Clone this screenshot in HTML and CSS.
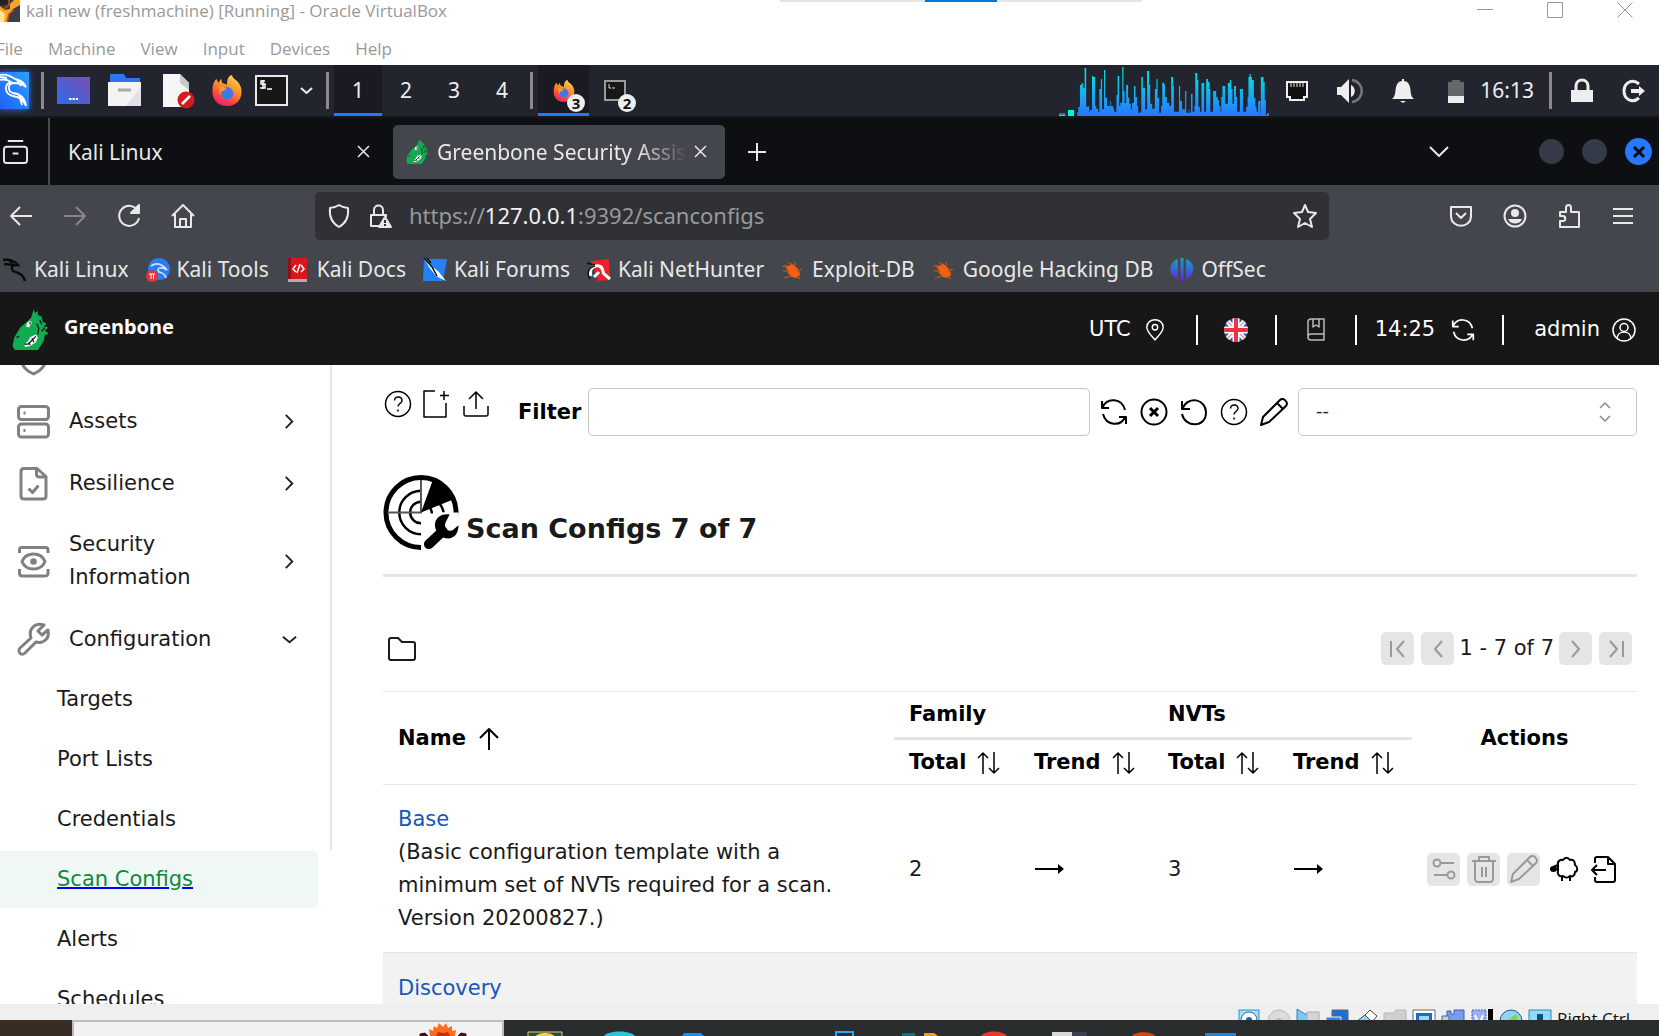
FILE: index.html
```html
<!DOCTYPE html>
<html lang="en">
<head>
<meta charset="utf-8">
<title>kali new (freshmachine) [Running] - Oracle VirtualBox</title>
<link rel="stylesheet" href="styles.css">
</head>
<body>
<svg class="defs" aria-hidden="true">
  <defs>
    <linearGradient id="g-fox" x1="0.8" y1="0" x2="0.3" y2="1"><stop offset="0" stop-color="#ffd94a"/><stop offset="0.45" stop-color="#ff8a2a"/><stop offset="0.8" stop-color="#ff3b47"/><stop offset="1" stop-color="#e0266e"/></linearGradient>
    <linearGradient id="g-cpu" x1="0" y1="0" x2="0" y2="1"><stop offset="0" stop-color="#00f0e0"/><stop offset="1" stop-color="#2777ff"/></linearGradient>
    <linearGradient id="g-desk" x1="0" y1="1" x2="1" y2="0"><stop offset="0" stop-color="#2f6be8"/><stop offset="1" stop-color="#7a4fb5"/></linearGradient>
    <linearGradient id="g-kali" x1="0" y1="1" x2="1" y2="0"><stop offset="0" stop-color="#1f62f5"/><stop offset="1" stop-color="#2ba0ff"/></linearGradient>
    <linearGradient id="g-off" x1="0" y1="0" x2="0" y2="1"><stop offset="0" stop-color="#12a5b8"/><stop offset="0.5" stop-color="#3565d8"/><stop offset="1" stop-color="#6a1fc4"/></linearGradient>
  </defs>
  <symbol id="firefox" viewBox="0 0 32 34"><path d="M16 33C7 33 1 27 1 18 1 12 2 8 5 5l2 4 3-4 1 4 5 2c0-5 1-9 5-10 1 4 4 4 7 8 2 3 3 6 3 9 0 9-6 15-15 15z" fill="url(#g-fox)"/><circle cx="16" cy="20" r="6.500" fill="#3f78e8"/><path d="M7 13c4-1 7 1 9 3-3 0-3 2-6 2l-1 4z" fill="#ff9a2e"/></symbol>
  <symbol id="gb-dragon" viewBox="0 0 38 42"><path d="M22 0l1 4 3-2v4l4 2 1 5 4 2-3 3 5 1-4 3 4 3-4 2-1 6-6 9-7 4-4-3-5 2-7-2-3-5 2-9 6-10 8-7 3-3z" fill="#11ab51"/><path d="M15 14l3-2 2 2-3 5-3-1z" fill="#fff"/><path d="M17 13l2 1-1 3z" fill="#171717"/><path d="M12 36l4-3 2-4 6-3 2 3-2 5-6 4-5 1z" fill="#fff"/><path d="M12 36l4 0 3-3 5-5M17 34l1 3M20 30l2 4M25 15l2 5-1 6M28 11l2 5M33 19l-3 4M4 29l3-1" fill="none" stroke="#171717" stroke-width="1.300"/></symbol>
  <symbol id="chev-r" viewBox="0 0 16 16"><path d="M4 1l7 7-7 7" /></symbol>
  <symbol id="chev-d" viewBox="0 0 16 16"><path d="M1 5l7 6 7-6"/></symbol>
  <symbol id="help" viewBox="0 0 28 28"><circle cx="14" cy="14" r="12.500"/><path d="M10.500 10.500c0-5 7.500-4.500 7.500 0 0 3-4 3-4 6M14 19.500v2"/></symbol>
  <symbol id="refresh" viewBox="0 0 28 28"><path d="M2 3v7h7M2.500 9.500C7-1 22 0 25 12M26 26v-7h-7M25.500 18.500C21 29 6 28 3 16"/></symbol>
  <symbol id="pencil" viewBox="0 0 28 28"><path d="M1 27l2-8L20 2c3-3 9 2 6 6L9 24zM17 5l6 6"/></symbol>
  <symbol id="sort" viewBox="0 0 26 24"><path d="M7 23V2M2 7l5-5 5 5M18 1v21M13 17l5 5 5-5"/></symbol>
  <symbol id="arrow" viewBox="0 0 32 16"><path d="M1 8h28"/><path d="M24 3l6 5-6 5z" fill="currentColor" stroke="none"/></symbol>
  <symbol id="bug" viewBox="0 0 24 24"><path d="M3 7l5 1 2-3 4 3 4 4 1 5-3 3-5-1-4-4-1-4z" fill="#f26012"/><path d="M7 4l3 3M14 4v4M21 11l-5 2M2 13h6M3 20l7-2M19 21l-3-3M1 8h5" fill="none" stroke="#a8521f" stroke-width="1.500"/></symbol>
</svg>

<header class="vb-head">
  <div class="vb-title">
    <svg class="vb-logo" viewBox="0 0 20 22"><path d="M0 0h20v22H0z" fill="#3a3d4a"/><path d="M0 6l5 4 5-1V4l4-4h6v5l-7 4-4 6-2 7H0z" fill="#f7a71b"/><path d="M0 0h9l-1 4-8 2z" fill="#222"/><path d="M0 10l5 4-1 8H0z" fill="#ffe3a0"/><path d="M9 0v5l-5 4M7 22l2-8 5-4" fill="none" stroke="#c64b12" stroke-width="1.500"/></svg>
    <span>kali new (freshmachine) [Running] - Oracle VirtualBox</span>
    <div class="vb-win">
      <button aria-label="Minimize"><svg viewBox="0 0 16 16"><path d="M0 7.500h16"/></svg></button>
      <button aria-label="Maximize"><svg viewBox="0 0 16 16"><path d="M.500.500h15v15H.500z"/></svg></button>
      <button aria-label="Close"><svg viewBox="0 0 16 16"><path d="M.500.500l15 15M15.500.500l-15 15"/></svg></button>
    </div>
  </div>
  <nav class="vb-menu"><button>File</button><button>Machine</button><button>View</button><button>Input</button><button>Devices</button><button>Help</button></nav>
  <div class="vb-strip"><i></i></div>
</header>

<div class="panel">
  <button class="kali-btn" aria-label="Applications"><svg viewBox="0 0 29 37"><path d="M0 0h29v37H0z" fill="url(#g-kali)"/><path d="M0 3c7-2 12 2 15 4 5 1 9 3 11 8-4-4-8-4-13-4-6 1-5 9 0 10 7 1 12 4 13 13-3-8-8-9-13-10-9-2-9-12-2-14C7 7 4 7 0 8M0 5l7 1M17 8l4 6M19 23l3 10" fill="none" stroke="#fff" stroke-width="1.800"/></svg></button>
  <span class="sep"></span>
  <div class="launch">
    <button aria-label="Show desktop"><svg viewBox="0 0 33 33"><path d="M0 3h33v27H0z" fill="url(#g-desk)"/><path d="M12 25h9" stroke="#fff" stroke-width="2" stroke-dasharray="2.500 1"/></svg></button>
    <button aria-label="Files"><svg viewBox="0 0 33 33"><path d="M3 0h14l2 4h14v10H3z" fill="#2f74ee"/><path d="M1 8h33v24H1z" fill="#f4f4f5"/><path d="M34 12v20H19z" fill="#e2e2e6"/><path d="M11 16h13" stroke="#aaa" stroke-width="3"/></svg></button>
    <button aria-label="Text editor"><svg viewBox="0 0 33 33"><path d="M6 0h17l9 9v24H6z" fill="#f6f6f6"/><path d="M23 0l9 9v7l-9-7z" fill="#c9c9cc"/><circle cx="29" cy="26" r="8.500" fill="#d51b20"/><path d="M25 30l8-8" stroke="#fff" stroke-width="2.500"/></svg></button>
    <button aria-label="Firefox"><svg viewBox="-4 0 33 33"><use href="#firefox" width="32" height="33"/></svg></button>
    <button aria-label="Terminal"><svg viewBox="0 0 33 33"><path d="M-1 2h31v29H-1z" fill="#171717" stroke="#e8e8e8" stroke-width="2"/><path d="M8 7H4v3h4v4H3M6 6v9M10 15h5" fill="none" stroke="#fff" stroke-width="1.500"/></svg></button>
  </div>
  <button class="more" aria-label="More"><svg class="ln w2" viewBox="0 0 13 13"><path d="M1 4l5.500 5L12 4"/></svg></button>
  <span class="sep sep-ws"></span>
  <div class="spaces"><button class="on">1</button><button>2</button><button>3</button><button>4</button></div>
  <span class="sep sep-ws"></span>
  <div class="tasks">
    <button class="on" aria-label="Firefox windows"><svg viewBox="0 0 22 24"><use href="#firefox" width="22" height="24"/></svg><b>3</b></button>
    <button aria-label="Terminal windows"><svg viewBox="0 0 22 24"><path d="M1 2h20v19H1z" fill="#171717" stroke="#9a9a9d" stroke-width="2"/><path d="M5 5v4h2M8 9h3" stroke="#ddd" fill="none"/></svg><b>2</b></button>
  </div>
  <div class="tray">
    <svg class="cpu" viewBox="28 195 541 153" preserveAspectRatio="none"><path d="M28 339h16v9H28z" fill="#15877c"/><path d="M28 345h16v3H28zM51 330h16v18H51z" fill="#00f5dc"/><path fill="url(#g-cpu)" d="M75 348V337H78V320H82V255H86V250H90V264H94V204H98V320H104V318H106V335H108V330H113V228H116V231H121V318H124V326H129V337H132V267H136V237H139V328H144V210H147V293H152V318H160V303H162V318H168V326H170V335H176V285H179V228H183V318H186V308H191V201H194V273H197V310H201V255H206V293H209V311H213V328H216V309H221V258H225V291H229V318H232V338H238V335H240V231H244V264H250V328H255V213H260V254H263V311H268V326H275V267H279V237H282V294H286V338H291V318H294V248H299V254H301V291H306V308H312V318H317V231H322V258H324V335H337V258H340V303H345V328H353V273H356V338H362V330H364V338H368V282H372V335H377V318H379V219H384V240H387V320H391V335H395V249H402V335H407V237H412V246H416V267H418V335H425V273H433V291H437V300H440V318H444V335H446V291H449V258H456V311H463V249H468V240H472V267H475V311H479V258H484V291H487V335H494V267H502V335H510V320H514V291H516V231H519V222H522V231H525V240H530V294H534V320H537V335H541V303H547V340H548V231H555V246H558V300H561V344H564V339H569V348z"/></svg>
    <div class="status">
      <svg viewBox="0 0 26 26"><path d="M3 4h20v15h-3v3H6v-3H3z" fill="#111" stroke="#eee" stroke-width="2"/><path d="M7 5v4M10 5v4M13 5v4M16 5v4M19 5v4" stroke="#eee"/></svg>
      <svg viewBox="0 0 26 26"><path d="M0 9h4l8-8v24l-8-8H0z" fill="#eee"/><path d="M14 7c5 2 5 10 0 12z" fill="#eee"/><path d="M15 2c13 2 13 20 0 22" fill="none" stroke="#77777c" stroke-width="2.500"/></svg>
      <svg viewBox="0 0 26 26"><path d="M2 21c4-3 3-8 4-12 1-4 3-6 6-6V1h2v2c3 0 5 2 6 6 1 4 0 9 4 12zM10 23h6l-3 2z" fill="#eee"/></svg>
      <svg viewBox="0 0 26 26"><path d="M9 2h8v2h4v21H5V4h4z" fill="#66666b"/><path d="M5 18h16v7H5z" fill="#eee"/></svg>
    </div>
    <time>16:13</time>
    <span class="sep"></span>
    <div class="session">
      <button aria-label="Lock"><svg viewBox="0 0 26 26"><path d="M2 12h22v12H2z" fill="#eee"/><path d="M7 12V8c0-8 12-8 12 0v4" fill="none" stroke="#eee" stroke-width="3"/></svg></button>
      <button aria-label="Log out"><svg viewBox="0 0 26 26"><path d="M18 6C11 0 3 5 3 13s8 13 15 7" fill="none" stroke="#eee" stroke-width="3"/><path d="M10 11h8V8l6 5-6 5v-3h-8z" fill="#eee"/></svg></button>
    </div>
  </div>
</div>

<div class="tabs">
  <button class="view" aria-label="Firefox View"><svg class="ln w2" viewBox="0 0 26 26"><path d="M5 2h16M4 8h18c2 0 3 1 3 3v11c0 2-1 3-3 3H4c-2 0-3-1-3-3V11c0-2 1-3 3-3zM10 15h6"/></svg></button>
  <div class="tab"><span>Kali Linux</span><button aria-label="Close tab"><svg class="ln" viewBox="0 0 13 13"><path d="M1 1l11 11M12 1L1 12"/></svg></button></div>
  <div class="tab on"><svg class="fav" viewBox="0 0 38 42"><use href="#gb-dragon"/></svg><span class="fade">Greenbone Security Assistant</span><button aria-label="Close tab"><svg class="ln" viewBox="0 0 13 13"><path d="M1 1l11 11M12 1L1 12"/></svg></button></div>
  <button class="plus" aria-label="New tab"><svg class="ln w2" viewBox="0 0 20 20"><path d="M10 1v18M1 10h18"/></svg></button>
  <div class="ctl">
    <button class="list" aria-label="List all tabs"><svg class="ln w2" viewBox="0 0 20 12"><path d="M1 1l9 9 9-9"/></svg></button>
    <button class="dot" aria-label="Minimize"></button><button class="dot" aria-label="Maximize"></button>
    <button class="dot close" aria-label="Close"><svg viewBox="0 0 12 12"><path d="M1 1l10 10M11 1L1 11" stroke="#0c0e12" stroke-width="3"/></svg></button>
  </div>
</div>

<div class="nav">
  <div class="nav-btns">
    <button aria-label="Back"><svg class="ln w2" viewBox="0 0 24 24"><path d="M23 12H2M11 3l-9 9 9 9"/></svg></button>
    <button aria-label="Forward" class="dim"><svg class="ln w2" viewBox="0 0 24 24"><path d="M1 12h21M13 3l9 9-9 9"/></svg></button>
    <button aria-label="Reload"><svg class="ln w2" viewBox="0 0 24 24"><path d="M21 7A10 10 0 1 0 22 14"/><path d="M22 1v8h-8z" fill="currentColor"/></svg></button>
    <button aria-label="Home"><svg class="ln w2" viewBox="0 0 24 24"><path d="M1 12L12 1l11 11M4 10v13h16V10M9 23v-8h6v8"/></svg></button>
  </div>
  <div class="url">
    <svg class="ln w2" viewBox="0 0 24 24"><path d="M12 1c3 2 6 3 9 3 1 9-2 15-9 19C5 19 2 13 3 4c3 0 6-1 9-3z"/></svg>
    <svg class="ln w2" viewBox="0 0 24 24"><path d="M12 22H3V11h15v2M6 11V6c0-6 9-6 9 0v5"/><path d="M17 13l6 10H11z" fill="currentColor"/><path d="M17 16v3M17 20v2" stroke="#303136"/></svg>
    <div class="addr" role="textbox" contenteditable="true" spellcheck="false" aria-label="Address">https://<b>127.0.0.1</b>:9392/scanconfigs</div>
    <button aria-label="Bookmark"><svg class="ln w2" viewBox="0 0 24 24"><path d="M12 1l3 7 8 1-6 6 2 8-7-4-7 4 2-8-6-6 8-1z"/></svg></button>
  </div>
  <div class="nav-end">
    <button aria-label="Pocket"><svg class="ln w2" viewBox="0 0 24 24"><path d="M2 3h20v9c0 13-20 13-20 0zM7 9l5 5 5-5"/></svg></button>
    <button aria-label="Account"><svg class="ln w2" viewBox="0 0 24 24"><circle cx="12" cy="12" r="10.500"/><circle cx="12" cy="9" r="4" fill="currentColor" stroke="none"/><path d="M5 15h14c-2 6-12 6-14 0z" fill="currentColor" stroke="none"/></svg></button>
    <button aria-label="Extensions"><svg class="ln w2" viewBox="0 0 24 24"><path d="M3 8h6V4c0-4 5-4 5 0v4h8v15H3v-6h3c3 0 3-5 0-5H3z"/></svg></button>
    <button aria-label="Menu"><svg class="ln w2" viewBox="0 0 24 24"><path d="M2 5h20M2 12h20M2 19h20"/></svg></button>
  </div>
</div>

<nav class="marks">
  <a href="#"><svg viewBox="0 0 24 24"><path d="M0 2c6-1 12 1 15 5-5 0-8 1-5 6 4 2 10 2 12 10M1 6l10 1M4 1l6 4" fill="none" stroke="#0b0b0d" stroke-width="2.500"/></svg>Kali Linux</a>
  <a href="#"><svg viewBox="0 0 24 24"><circle cx="13" cy="11" r="11" fill="#2b7cf5"/><path d="M5 8c7-5 12-1 16 4-6-4-11-2-8 2 4 1 6 2 7 6" fill="none" stroke="#cfe4ff" stroke-width="1.800"/><circle cx="6" cy="18" r="6" fill="#e3343c"/><path d="M3 16h6M5 16v5M7.500 16v5" stroke="#fff"/></svg>Kali Tools</a>
  <a href="#"><svg viewBox="0 0 24 24"><path d="M2 0h19v21H2z" fill="#d8161c"/><path d="M2 0h3v21H2z" fill="#8d1016"/><path d="M2 21h19v3H2z" fill="#b9a9aa"/><path d="M10 7l-3 4 3 3M15 7l3 4-3 3M14 6l-3 9" fill="none" stroke="#fff" stroke-width="1.500"/></svg>Kali Docs</a>
  <a href="#"><svg viewBox="0 0 24 24"><path d="M1 1h23l-4 22H0z" fill="#2481f5"/><path d="M1 0l7 8 7 5 8 10-10-5-7-9z" fill="#fff"/><path d="M1 0l8 9 5 9M4 0l4 5" fill="none" stroke="#111" stroke-width="1.500"/></svg>Kali Forums</a>
  <a href="#"><svg viewBox="0 0 24 24"><path d="M4 3l18-2 1 21-12 1z" fill="#e8232b"/><path d="M4 18c-2-7 2-11 8-10 5 1 3 6 5 8l6 5M12 14l-5 5" fill="none" stroke="#fff" stroke-width="3"/><path d="M0 5l8 2M3 21c-4-6-1-12 5-13" fill="none" stroke="#111" stroke-width="1.500"/></svg>Kali NetHunter</a>
  <a href="#"><svg viewBox="0 0 24 24"><use href="#bug"/></svg>Exploit-DB</a>
  <a href="#"><svg viewBox="0 0 24 24"><use href="#bug"/></svg>Google Hacking DB</a>
  <a href="#"><svg viewBox="0 0 24 24"><path d="M8 1v20C-2 18-2 4 8 1zM16 1v20c10-3 10-17 0-20zM10.500 0h3v24h-3z" fill="url(#g-off)"/></svg>OffSec</a>
</nav>

<header class="gb-head">
  <a href="#" class="gb-brand"><svg viewBox="0 0 38 42"><use href="#gb-dragon"/></svg><span>Greenbone</span></a>
  <div class="gb-tools">
    <button class="tz">UTC<svg class="ln" viewBox="0 0 22 24"><path d="M11 23C7 18 2 14 2 9 2-2 20-2 20 9c0 5-5 9-9 14z"/><circle cx="11" cy="9" r="3"/></svg></button>
    <button class="lang" aria-label="Language"><svg viewBox="0 0 24 24"><clipPath id="c"><circle cx="12" cy="12" r="12"/></clipPath><g clip-path="url(#c)"><path d="M0 0h24v24H0z" fill="#2a55b5"/><path d="M0 0l24 24M24 0L0 24" stroke="#fff" stroke-width="5"/><path d="M0 0l24 24M24 0L0 24" stroke="#f09a9a" stroke-width="1.500"/><path d="M12 0v24M0 12h24" stroke="#fff" stroke-width="7"/><path d="M12 0v24M0 12h24" stroke="#ee3340" stroke-width="4"/></g></svg></button>
    <button class="book" aria-label="Manual"><svg class="ln" viewBox="0 0 20 24"><path d="M2 19V4c0-2 1-3 3-3h13v15H5c-4 0-4 6 0 6h13v-6M7 1v8l3-2 3 2V1"/></svg></button>
    <button class="clock">14:25<svg class="ln w2" viewBox="0 0 28 28"><use href="#refresh"/></svg></button>
    <button class="user">admin<svg class="ln" viewBox="0 0 24 24"><circle cx="12" cy="12" r="11"/><circle cx="12" cy="9.500" r="4"/><path d="M5 20c1-8 13-8 14 0"/></svg></button>
  </div>
</header>

<div class="body">
  <aside class="side">
    <div class="peek"><svg class="ln" viewBox="0 0 33 33"><path d="M16.500 1L29 6v10c0 8-6 13-12.500 16C10 29 4 24 4 16V6z"/></svg></div>
    <button class="top"><svg class="ln" viewBox="0 0 33 33"><rect x="1.500" y="1.500" width="30" height="13" rx="3"/><rect x="1.500" y="19" width="30" height="13" rx="3"/><path d="M6.500 8h2M6.500 25.500h2"/></svg><span>Assets</span><svg class="ch" viewBox="0 0 16 16"><use href="#chev-r"/></svg></button>
    <button class="top"><svg class="ln" viewBox="0 0 33 33"><path d="M7 1.500h13l9 8V29c0 2-1 3-3 3H7c-2 0-3-1-3-3V4.500c0-2 1-3 3-3zM19.500 2v5c0 2 1 3 3 3H29M11.500 21.500l4 4 6-7"/></svg><span>Resilience</span><svg class="ch" viewBox="0 0 16 16"><use href="#chev-r"/></svg></button>
    <button class="top"><svg class="ln" viewBox="0 0 33 33"><path d="M2.500 8V5c0-2 1-2.500 2-2.500h24c2 0 2.500 1 2.500 2.500v3M2.500 24v4c0 2 1 3 3 3h22c3 0 3.500-1 3.500-3v-4"/><path d="M5 16.500c4-10 19-10 23 0-4 10-19 10-23 0z"/><circle cx="16.500" cy="16.500" r="1.800" fill="currentColor"/></svg><span>Security Information</span><svg class="ch" viewBox="0 0 16 16"><use href="#chev-r"/></svg></button>
    <button class="top"><svg class="ln" viewBox="0 0 33 33"><path d="M3 25l11-10C11 6 18-1 27 2l-6 6 4 4 6-5c2 8-4 14-12 12L8 30c-4 4-8-2-5-5z"/></svg><span>Configuration</span><svg class="ch" viewBox="0 0 16 16"><use href="#chev-d"/></svg></button>
    <nav class="sub"><a href="#">Targets</a><a href="#">Port Lists</a><a href="#">Credentials</a><a href="#" class="on"><span>Scan Configs</span></a><a href="#">Alerts</a><a href="#">Schedules</a></nav>
    <i class="edge"></i>
  </aside>

  <main>
    <div class="tools">
      <div class="left">
        <button aria-label="Help"><svg class="ln" viewBox="0 0 28 28"><use href="#help"/></svg></button>
        <button aria-label="New scan config"><svg class="ln" viewBox="0 0 28 28"><path d="M12 1H1v26h22V13M21 1v9M17 5.500h9"/></svg></button>
        <button aria-label="Import"><svg class="ln" viewBox="0 0 28 28"><path d="M2 16v8c0 1 1 2 2 2h20c1 0 2-1 2-2v-8M14 19V2M7 9l7-7 7 7"/></svg></button>
      </div>
      <label for="filter">Filter</label>
      <input id="filter" type="text">
      <div class="acts">
        <button aria-label="Update filter"><svg class="ln w2" viewBox="0 0 28 28"><use href="#refresh"/></svg></button>
        <button aria-label="Remove filter"><svg class="ln w2" viewBox="0 0 28 28"><circle cx="14" cy="14" r="12.500" /><path d="M10 10l8 8M18 10l-8 8" stroke-width="3"/></svg></button>
        <button aria-label="Reset filter"><svg class="ln w2" viewBox="0 0 28 28"><path d="M2 3v8h8M2.500 10.500C8-3 26 1 26 14.500 26 30 5 30 2 16"/></svg></button>
        <button aria-label="Filter help"><svg class="ln" viewBox="0 0 28 28"><use href="#help"/></svg></button>
        <button aria-label="Edit filter"><svg class="ln w2" viewBox="0 0 28 28"><use href="#pencil"/></svg></button>
      </div>
      <div class="pick"><select aria-label="Saved filter"><option>--</option></select><svg class="ln" viewBox="0 0 14 20"><path d="M2 6l5-5 5 5M2 14l5 5 5-5"/></svg></div>
    </div>

    <div class="head">
      <svg viewBox="0 0 76 76"><circle cx="38" cy="38" r="35.500" fill="#fff" stroke="#000" stroke-width="5"/><path d="M38 16A22 22 0 0 0 38 60M38 27A11 11 0 0 0 38 49M56 28a22 22 0 0 1 5 10M47 33a11 11 0 0 1 2 6" fill="none" stroke="#000" stroke-width="2.500"/><path d="M38 5v33H4" fill="none" stroke="#555" stroke-width="2"/><path d="M38 38L50 5c10 4 16 10 20 20z"/><path d="M38 76V62l14-14V38h24v38z" fill="#fff"/><path d="M46 70l14-13" stroke="#000" stroke-width="10" stroke-linecap="round"/><path d="M67 40c-14-2-19 11-11 20 8 8 20 5 20-9l-6 5c-6 2-9-3-7-8z"/></svg>
      <h1>Scan Configs 7 of 7</h1>
    </div>

    <div class="bar">
      <button class="folder" aria-label="All rows"><svg class="ln w2" viewBox="0 0 28 24"><path d="M3 1h7l4 4h11c1 0 2 1 2 2v14c0 1-1 2-2 2H3c-1 0-2-1-2-2V3c0-1 1-2 2-2z"/></svg></button>
      <div class="pager">
        <div class="pages">
          <button disabled aria-label="First"><svg class="ln w2" viewBox="0 0 20 20"><path d="M3 2v16M16 2L9 10l7 8"/></svg></button>
          <button disabled aria-label="Previous"><svg class="ln w2" viewBox="0 0 20 20"><path d="M14 2l-7 8 7 8"/></svg></button>
        </div>
        <span>1 - 7 of 7</span>
        <div class="pages">
          <button disabled aria-label="Next"><svg class="ln w2" viewBox="0 0 20 20"><path d="M6 2l7 8-7 8"/></svg></button>
          <button disabled aria-label="Last"><svg class="ln w2" viewBox="0 0 20 20"><path d="M4 2l7 8-7 8M17 2v16"/></svg></button>
        </div>
      </div>
    </div>

    <table>
      <colgroup><col><col class="c-total"><col class="c-trend"><col class="c-total"><col class="c-trend"><col class="c-act"></colgroup>
      <thead>
        <tr><th rowspan="2" class="t b">Name<svg class="ln w2" viewBox="0 0 26 24"><path d="M13 23V3M4 11l9-9 9 9"/></svg></th><th colspan="2" class="t grp">Family</th><th colspan="2" class="t grp">NVTs</th><th rowspan="2" class="t b mid">Actions</th></tr>
        <tr><th class="b">Total<svg class="ln" viewBox="0 0 26 24"><use href="#sort"/></svg></th><th class="b">Trend<svg class="ln" viewBox="0 0 26 24"><use href="#sort"/></svg></th><th class="b">Total<svg class="ln" viewBox="0 0 26 24"><use href="#sort"/></svg></th><th class="b">Trend<svg class="ln" viewBox="0 0 26 24"><use href="#sort"/></svg></th></tr>
      </thead>
      <tbody>
        <tr>
          <td><a href="#">Base</a><p>(Basic configuration template with a minimum set of NVTs required for a scan. Version 20200827.)</p></td>
          <td>2</td><td><svg class="ln w2 trend" viewBox="0 0 32 16"><use href="#arrow"/></svg></td>
          <td>3</td><td><svg class="ln w2 trend" viewBox="0 0 32 16"><use href="#arrow"/></svg></td>
          <td><div class="row-acts">
            <button disabled aria-label="Settings"><svg class="ln w2" viewBox="0 0 28 28"><circle cx="7" cy="8" r="3.500"/><path d="M11 8h13M4 20h13"/><circle cx="21" cy="20" r="3.500"/></svg></button>
            <button disabled aria-label="Delete"><svg class="ln w2" viewBox="0 0 28 28"><path d="M2 6h24M5 6v18c0 1 1 3 3 3h12c2 0 3-2 3-3V6M9 6V2h10v4M12 12v10M16 12v10"/></svg></button>
            <button disabled aria-label="Edit"><svg class="ln w2" viewBox="0 0 28 28"><use href="#pencil"/></svg></button>
            <button aria-label="Clone"><svg class="ln w2" viewBox="0 0 28 28"><path d="M8 10c-1-4 3-6 5-5 2-3 5-3 7 0 4-1 5 2 5 5 3 2 3 6 0 7 0 4-3 5-5 4-2 2-5 2-7 0-4 1-6-2-5-5M12 21v5M20 21v5"/><ellipse cx="3.500" cy="14" rx="3.500" ry="3" fill="currentColor" stroke="none"/><path d="M3 12l5-2v6"/></svg></button>
            <button aria-label="Export"><svg class="ln w2" viewBox="0 0 28 28"><path d="M5 8V4c0-1 1-2 2-2h11l7 7v16c0 1-1 2-2 2H7c-1 0-2-1-2-2v-3M18 2v7h7M2 15h14M7 10l-5 5 5 5"/></svg></button>
          </div></td>
        </tr>
        <tr class="alt"><td colspan="6"><a href="#">Discovery</a></td></tr>
      </tbody>
    </table>
  </main>
</div>

<footer class="vb-foot">
  <svg viewBox="0 0 24 24"><rect x="1" y="1" width="20" height="22" fill="#9ee0ff" stroke="#3a8fc8"/><circle cx="11" cy="11" r="8" fill="#fff" stroke="#2a6fb0"/><circle cx="11" cy="11" r="3" fill="#2060a0"/></svg>
  <svg viewBox="0 0 24 24"><circle cx="12" cy="12" r="11" fill="#dcdcdc" stroke="#bbb"/><circle cx="12" cy="12" r="3" fill="#bbb"/></svg>
  <svg viewBox="0 0 24 24"><path d="M1 0l8 5h7v19H1z" fill="#7cc9f2" stroke="#3a7fb5"/><path d="M11 3h12v14H11z" fill="#d5d5d5" stroke="#aaa"/></svg>
  <svg viewBox="0 0 24 24"><path d="M7 1h16v13H7z" fill="#1f6fd0" stroke="#567"/><path d="M1 8h15v13H1z" fill="#2f86e8" stroke="#eee"/></svg>
  <svg viewBox="0 0 24 24"><path d="M3 12l8-6 6 6-8 12H2z" fill="#8fd6f7" stroke="#456"/><path d="M11 6l5-5 7 6-5 6z" fill="#fff" stroke="#444"/></svg>
  <svg viewBox="0 0 24 24"><path d="M1 4h10l2-3h10v22H1z" fill="#cfcfcf" stroke="#b5b5b5"/></svg>
  <svg viewBox="0 0 24 24"><path d="M1 1h22v20H1z" fill="#fff" stroke="#667"/><path d="M4 4h16v14H4z" fill="#1d69cc"/><path d="M7 7h10v8H7z" fill="#9cd7f8"/></svg>
  <svg viewBox="0 0 24 24"><path d="M6 2h4v3h3V1h10v20H6z" fill="#7a9cf0" stroke="#3d5cb0"/><path d="M1 7h7v15H1z" fill="#bcd0f8" stroke="#567"/></svg>
  <svg viewBox="0 0 24 24"><path d="M2 1h14v22H2z" fill="#9ab2f5" stroke="#4a62a8" stroke-dasharray="2 1"/><path d="M5 6l4 10 4-10" fill="none" stroke="#fff" stroke-width="2"/><path d="M18 0h5v24h-5z"/></svg>
  <svg viewBox="0 0 24 24"><circle cx="12" cy="12" r="11" fill="#8fd4f0" stroke="#357"/><path d="M5 14l12-9 3 10-8 8z" fill="#7bd84a"/></svg>
  <svg viewBox="0 0 24 24"><path d="M1 1h22v22H1z" fill="#8fdcf8" stroke="#3b86b4"/><path d="M9 5h6v6h4l-7 9-7-9h4z" fill="#0f4d80"/></svg>
  <span>Right Ctrl</span>
</footer>

<footer class="win">
  <div class="start"></div>
  <div class="search"><svg viewBox="0 0 50 14"><path d="M2 12l5-1 3 3H2zM48 12l-5-1-3 3h8z" fill="#401018" stroke="#401018"/><path d="M12 14l-1-7 4 2 1-5 3 2 2-5 4 4 3-4 2 5 4-2v5l4-1-1 6z" fill="#ff6a1f"/><path d="M18 14l2-4 5 1 5-1 2 4z" fill="#c5330c"/></svg></div>
  <svg class="apps" viewBox="0 0 760 16"><path d="M24 16v-4h34v4" fill="#2b4a4e" stroke="#f2cf55"/><path d="M32 16c2-4 16-4 18 0z" fill="#f2cf55"/><path d="M100 16c4-6 27-6 31 0z" fill="#2cc5d8"/><path d="M178 16l2-3h17l3 3z" fill="#1c8df2"/><path d="M332 16v-4h17v4" fill="none" stroke="#2da6f2" stroke-width="2"/><path d="M398 16v-3h13v3z" fill="#0d7280"/><path d="M420 16v-3h10l4 3z" fill="#ff9a12"/><path d="M477 16c4-6 22-6 26 0z" fill="#e63a30"/><path d="M548 16v-4h20v4z" fill="#d8d8d8"/><path d="M568 16v-4h15v4z" fill="#3c4152"/><path d="M628 16c3-5 20-5 23 0z" fill="#e0400d"/><path d="M701 16v-3h31v3z" fill="#1e86d8"/></svg>
</footer>
</body>
</html>
```
FILE: styles.css
```css
* { box-sizing: border-box; }
body { margin: 0; height: 100vh; display: flex; flex-direction: column; overflow: hidden; background: #fff; font-family: "DejaVu Sans", sans-serif; font-size: 21px; line-height: 33px; color: #1a1a1a; }
button { font: inherit; color: inherit; background: none; border: 0; padding: 0; margin: 0; display: flex; align-items: center; justify-content: center; text-align: left; flex: none; }
a { color: inherit; text-decoration: none; }
svg { display: block; flex: none; overflow: visible; }
.defs { position: absolute; width: 0; height: 0; }
.ln { fill: none; stroke: currentColor; stroke-width: 1.5px; stroke-linejoin: round; }
.w2 { stroke-width: 2px; }

/* VirtualBox window frame */
.vb-head { position: relative; flex: none; font-family: "Open Sans", sans-serif; font-size: 17px; line-height: 22px; color: #999; background: #fff; }
.vb-title { display: flex; height: 32px; gap: 6px; }
.vb-logo { width: 20px; height: 22px; }
.vb-win { margin-left: auto; display: flex; gap: 54px; padding: 2px 26px 0 0; align-items: flex-start; }
.vb-win svg { width: 16px; height: 16px; fill: none; stroke: #999; }
.vb-menu { display: flex; gap: 25px; height: 33px; margin-left: -4px; }
.vb-strip { position: absolute; top: 0; left: 47%; width: 362px; height: 2px; background: #e5e5e5; display: flex; justify-content: center; }
.vb-strip i { width: 72px; background: #0078d7; }

/* Kali panel */
.panel { flex: none; height: 53px; display: flex; align-items: center; background: #23252e; color: #eee; font-family: "Noto Sans", sans-serif; border-bottom: 2px solid #17181c; }
.kali-btn svg { width: 29px; height: 37px; box-shadow: 0 0 6px #2b74f5; }
.sep { width: 3px; height: 37px; background: #8a8a8d; margin: 0 13px 0 12px; flex: none; }
.sep-ws { margin: 0 5px 0 4px; }
.launch { display: flex; gap: 17px; }
.launch svg { width: 33px; height: 33px; }
.more { padding: 0 9px 0 10px; }
.more svg { width: 13px; height: 13px; }
.spaces, .tasks { display: flex; align-self: stretch; }
.spaces button { width: 48px; }
.tasks button { width: 51px; position: relative; }
.spaces .on, .tasks .on { background: #1a1b22; box-shadow: inset 0 -3px #2777ff; }
.tasks svg { width: 22px; height: 24px; }
.tasks b { position: absolute; right: 4px; bottom: 4px; width: 18px; height: 18px; border-radius: 9px; background: #eee; color: #111; font-size: 15px; line-height: 18px; text-align: center; }
.tray { margin-left: auto; display: flex; align-items: center; align-self: stretch; padding-right: 12px; }
.cpu { width: 210px; height: 51px; margin-right: 15px; }
.status { display: flex; gap: 27px; }
.status svg, .session svg { width: 26px; height: 26px; }
.tray time { margin-left: 11px; }
.tray .sep { margin: 0 17px 0 15px; }
.session { display: flex; gap: 26px; }

/* Browser tabs */
.tabs { flex: none; height: 67px; display: flex; align-items: center; background: #0d0f13; color: #e8e8e8; font-family: "Noto Sans", sans-serif; }
.view { width: 50px; align-self: stretch; border-right: 2px solid #4a4b50; padding-right: 18px; }
.view svg { width: 25px; height: 25px; }
.tab { display: flex; align-items: center; width: 338px; height: 54px; padding: 0 18px; margin-right: 5px; }
.tab span { flex: 1; overflow: hidden; white-space: nowrap; padding-top: 1px; }
.tab button svg { width: 13px; height: 13px; }
.tab.on { width: 332px; padding-left: 12px; border-radius: 5px; background: #44464e; gap: 7px; margin-right: 22px; }
.tab.on .fade { mask-image: linear-gradient(to right, #000 80%, transparent); }
.fav { width: 25px; height: 25px; }
.plus svg { width: 20px; height: 20px; }
.ctl { margin-left: auto; display: flex; align-items: center; gap: 18px; padding-right: 7px; }
.list { margin-right: 72px; }
.list svg { width: 20px; height: 12px; }
.dot { width: 25px; height: 25px; border-radius: 13px; background: #353a48; }
.dot.close { width: 27px; height: 27px; border-radius: 14px; background: #2777ff; }
.dot svg { width: 12px; height: 12px; }

/* Address bar */
.nav { flex: none; height: 60px; display: flex; align-items: center; background: #44464e; color: #e8e8e8; font-family: "Noto Sans", sans-serif; padding: 1px 24px 0 9px; }
.nav svg { width: 24px; height: 24px; }
.nav-btns { display: flex; gap: 30px; margin-right: 120px; }
.dim { color: #85868b; }
.url { flex: 1; height: 48px; display: flex; align-items: center; gap: 17px; padding: 0 12px; border-radius: 5px; background: #303136; }
.addr { flex: 1; font-size: 22px; color: #98999c; white-space: nowrap; outline: 0; }
.addr b { font-weight: 400; color: #f2f2f2; }
.nav-end { display: flex; gap: 30px; margin-left: 120px; }

.marks { flex: none; height: 48px; display: flex; align-items: center; gap: 17px; padding: 2px 0 0 3px; background: #44464e; color: #e8e8e8; font-family: "Noto Sans", sans-serif; border-bottom: 1px solid #15161a; white-space: nowrap; }
.marks a { display: flex; align-items: center; gap: 7px; }
.marks svg { width: 24px; height: 24px; }

/* Greenbone header */
.gb-head { flex: none; height: 72px; display: flex; justify-content: space-between; align-items: center; background: #171717; color: #fff; padding-top: 1px; }
.gb-brand { display: flex; gap: 14px; padding: 0 0 0 12px; font: bold 20px/35px "Noto Sans", sans-serif; }
.gb-brand svg { width: 38px; height: 41px; }
.gb-tools { display: flex; }
.gb-tools button { height: 30px; gap: 14px; }
.gb-tools button + button { border-left: 2px solid #fff; }
.gb-tools svg { height: 24px; width: 24px; }
.gb-tools .tz svg { width: 20px; }
.tz { padding-right: 31px; }
.lang { width: 79px; }
.book { width: 80px; color: #bbb; }
.gb-tools .clock { gap: 15px; padding: 0 26px 0 18px; }
.clock svg { width: 26px; }
.gb-tools .user { gap: 12px; padding: 0 23px 0 30px; }

/* Content */
.body { flex: 1; min-height: 0; display: flex; overflow: hidden; }
.side { position: relative; flex: none; width: 332px; overflow: hidden; }
.edge { position: absolute; right: 0; top: 0; width: 2px; height: 485px; background: #e5e5e5; }
.peek { height: 25px; padding-left: 17px; display: flex; align-items: flex-start; overflow: hidden; }
.peek svg { width: 33px; height: 33px; margin-top: -23px; }
.top { width: 314px; min-height: 62px; padding: 14px 17px 14px 17px; gap: 19px; }
.top span { flex: 1; padding-right: 50px; }
.top .ln, .peek .ln { width: 33px; height: 33px; color: #808080; stroke-width: 3px; }
.ch { width: 15px; height: 15px; fill: none; stroke: #222; stroke-width: 2px; }
.sub { display: flex; flex-direction: column; gap: 3px; padding-top: 1px; }
.sub a { width: 318px; padding: 12px 0 12px 57px; border-radius: 0 5px 5px 0; }
.sub .on { background: #eff8f5; color: #00f; text-decoration: underline; text-decoration-thickness: 2px; }
.sub .on span { color: #11883f; }

main { flex: 1; min-width: 0; padding: 23px 22px 0 51px; }
.tools { display: flex; align-items: center; height: 48px; color: #000; }
.left { display: flex; gap: 11px; align-self: flex-start; padding: 2px 28px 0 1px; }
.left svg, .acts svg { width: 28px; height: 28px; }
.tools label { font-weight: bold; margin-right: 7px; }
.tools input { flex: 1; min-width: 0; height: 48px; font: inherit; border: 1px solid #c6c6c6; border-radius: 5px; padding: 0 16px; }
.acts { display: flex; gap: 12px; padding: 0 10px; }
.pick { position: relative; width: 339px; }
.pick select { appearance: none; width: 100%; height: 48px; font: inherit; font-size: 18px; color: #222; background: #fff; border: 1px solid #c6c6c6; border-radius: 5px; padding: 0 17px 3px; }
.pick svg { position: absolute; right: 25px; top: 14px; width: 14px; height: 20px; color: #888; }

.head { display: flex; align-items: flex-end; gap: 7px; margin-top: 39px; padding-bottom: 24px; border-bottom: 3px solid #e5e5e5; }
.head svg { width: 76px; height: 75px; }
h1 { margin: 0; font-size: 27px; line-height: 42px; }

.bar { display: flex; justify-content: space-between; align-items: center; margin: 55px 5px 26px; }
.folder svg { width: 28px; height: 24px; }
.pager { display: flex; gap: 5px; align-items: center; }
.pages, .row-acts { display: flex; gap: 7px; align-items: center; }
.pages button, .row-acts button { width: 33px; height: 33px; border-radius: 5px; color: #000; }
.pages button:disabled, .row-acts button:disabled { background: #e5e5e5; color: #999; }
.pages svg { width: 20px; height: 20px; }
.row-acts svg { width: 28px; height: 28px; }

table { width: 100%; table-layout: fixed; border-spacing: 0; }
.c-total { width: 125px; }
.c-trend { width: 134px; }
.c-act { width: 225px; }
th { text-align: left; padding: 6px 0 5px 15px; color: #000; white-space: nowrap; }
th svg { display: inline-block; vertical-align: middle; width: 26px; height: 24px; margin-left: 10px; }
th.t { border-top: 1px solid #e5e5e5; }
th.b { border-bottom: 1px solid #e5e5e5; }
th.grp { border-bottom: 3px solid #e5e5e5; padding: 6px 0 6px 15px; }
th.mid { text-align: center; padding-left: 0; }
td { padding: 18px 0 17px 15px; border-bottom: 1px solid #e5e5e5; }
td a { color: #1457bd; }
td p { margin: 0; max-width: 450px; }
.trend { width: 32px; height: 16px; color: #000; }
.alt td { background: #f2f2f2; padding-top: 19px; }

/* VirtualBox status bar and host taskbar */
.vb-foot { flex: none; height: 16px; display: flex; justify-content: flex-end; gap: 5px; padding: 5px 29px 0 0; overflow: hidden; background: #efefef; color: #111; font: 17px/20px "Open Sans", sans-serif; }
.vb-foot svg { width: 24px; height: 24px; }
.win { flex: none; height: 16px; display: flex; overflow: hidden; background: #2a2d2e; }
.start { width: 72px; background: #382c24; }
.search { width: 432px; background: #f2f2f2; border: 2px solid #bcbcbc; border-bottom: 0; padding-left: 344px; }
.search svg { width: 50px; height: 14px; }
.apps { width: 760px; height: 16px; }
```
